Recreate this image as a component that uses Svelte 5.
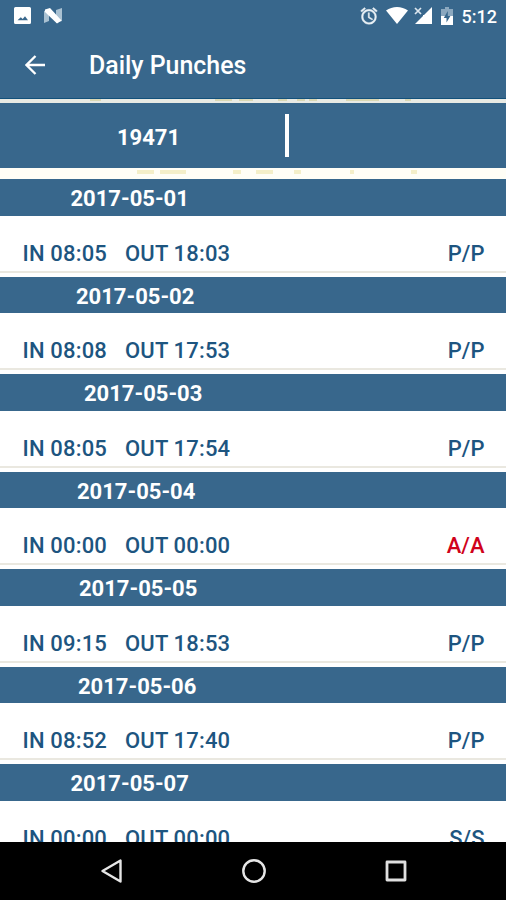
<script>
  const employee = '19471';

  // indent: where each date label starts in its bar
  const punches = [
    { date: '2017-05-01', indent: 70.5, in: '08:05', out: '18:03', status: 'P/P' },
    { date: '2017-05-02', indent: 76, in: '08:08', out: '17:53', status: 'P/P' },
    { date: '2017-05-03', indent: 84, in: '08:05', out: '17:54', status: 'P/P' },
    { date: '2017-05-04', indent: 77, in: '00:00', out: '00:00', status: 'A/A' },
    { date: '2017-05-05', indent: 79, in: '09:15', out: '18:53', status: 'P/P' },
    { date: '2017-05-06', indent: 78, in: '08:52', out: '17:40', status: 'P/P' },
    { date: '2017-05-07', indent: 70.5, in: '00:00', out: '00:00', status: 'S/S' },
  ];
</script>

<div class="screen">
  <header>
    <div class="statusbar">
      <svg class="photo" width="17" height="17" viewBox="0 0 17 17">
        <path fill="#fff" fill-rule="evenodd" d="M1.500 0h14A1.500 1.500 0 0 1 17 1.500v14a1.500 1.500 0 0 1-1.500 1.500h-14A1.500 1.500 0 0 1 0 15.500v-14A1.500 1.500 0 0 1 1.500 0zM3.500 13.300h10.500l-3-4-2.300 2.700-1.900-1.800z" />
      </svg>
      <svg class="nougat" width="20" height="16" viewBox="0 0 20 16">
        <path fill="#a9c1d2" d="M1 3l5-2v12l-5 2zM13 2l6-2v13l-6 2z" />
        <path fill="#fff" d="M2 1.500L7 0l11.500 12.500L14 15.500 2 4z" />
      </svg>
      <span class="gap"></span>
      <svg class="alarm" width="20" height="20" viewBox="0 0 24 24">
        <path fill="#e9f0f5" stroke="#e9f0f5" stroke-width=".5" d="M22 5.720l-4.600-3.860-1.290 1.530 4.600 3.860L22 5.720zM7.880 3.390L6.600 1.860 2 5.710l1.290 1.530 4.590-3.850zM12.500 8H11v6l4.750 2.850.75-1.230-4-2.370V8zM12 4c-4.970 0-9 4.030-9 9s4.020 9 9 9a9 9 0 0 0 0-18zm0 16c-3.870 0-7-3.130-7-7s3.130-7 7-7 7 3.130 7 7-3.130 7-7 7z" />
      </svg>
      <svg class="wifi" width="22" height="17" viewBox="0 0 22 17">
        <path fill="#fff" d="M11 17L0 3.500Q5 0 11 0t11 3.500z" />
      </svg>
      <svg class="signal" width="18" height="17" viewBox="0 0 18 17">
        <path fill="#fff" d="M18 0v17H1l8-8V8h1z" />
        <path stroke="#dce7ef" stroke-width="1.700" d="M1 1l6 6M7 1L1 7" />
      </svg>
      <svg class="battery" width="12" height="18" viewBox="0 0 12 18">
        <path fill="#8ba8bf" d="M4 0h4v2h4v7H0V2h4z" />
        <path fill="#fff" d="M0 9h12v9H0z" />
        <path fill="#38678c" d="M6.800 4L2.800 11h2.700v4.500L9.400 9H6.800z" />
      </svg>
      <span class="clock">5:12</span>
    </div>
    <div class="toolbar">
      <svg class="back" width="20" height="20" viewBox="0 0 20 20" fill="none" stroke="#fff" stroke-width="2.300">
        <path d="M20 10H2M10.500 1L1.500 10l9 9" />
      </svg>
      <h1>Daily Punches</h1>
    </div>
  </header>

  <svg class="strip" width="506" height="4" viewBox="0 0 506 4">
    <path stroke="#d9d7b4" stroke-width="2" d="M90 1h11M215 1h17M239 1h14M278 1h9M297 1h8M309 1h8M346 1h33M405 1h6" />
  </svg>

  <div class="employee">
    <span>{employee}</span>
    <i class="cursor"></i>
  </div>

  <svg class="strip light" width="506" height="11" viewBox="0 0 506 11">
    <path stroke="#f4efc9" stroke-width="4" d="M137 4h17M160 4h26M233 4h8M256 4h17M294 4h7M350 4h4M411 4h6" />
  </svg>

  <main>
    {#each punches as punch}
      <section>
        <h2 style="padding-left: {punch.indent}px">{punch.date}</h2>
        <div class="row">
          <span class="in">IN {punch.in}</span>
          <span class="out">OUT {punch.out}</span>
          <span class="status" class:absent={punch.status === 'A/A'}>{punch.status}</span>
        </div>
      </section>
    {/each}
  </main>

  <nav>
    <svg width="22" height="24" viewBox="0 0 22 24" fill="none" stroke="#e6e6e6" stroke-width="2.400" stroke-linejoin="round">
      <path d="M19.500 1.500v21L1.500 12z" />
    </svg>
    <svg width="24" height="24" viewBox="0 0 24 24" fill="none" stroke="#e6e6e6" stroke-width="2.400">
      <circle cx="12" cy="12" r="10.700" />
    </svg>
    <svg width="22" height="22" viewBox="0 0 22 22" fill="none" stroke="#e0e0e0" stroke-width="2.800" stroke-linejoin="round">
      <path d="M2 2h18v18H2z" />
    </svg>
  </nav>
</div>

<style>
  :global(body) {
    margin: 0;
    background: #fff;
  }
  .screen {
    display: flex;
    flex-direction: column;
    width: 506px;
    height: 900px;
    overflow: hidden;
    font-family: Roboto, sans-serif;
    color: #fff;
  }
  svg {
    display: block;
    flex: none;
  }
  header {
    flex: none;
    height: 99px;
    background: #38678c;
    border-bottom: 1px solid #13517b;
    box-sizing: border-box;
  }
  .statusbar {
    display: flex;
    align-items: center;
    height: 32px;
    padding: 0 9px 0 14px;
  }
  .photo {
    margin: -1px 12px 0 0;
  }
  .gap {
    flex: 1;
  }
  .alarm {
    margin: -1px 7px 0 0;
  }
  .wifi {
    margin: -2px 6px 0 0;
  }
  .signal {
    margin: -1px 9px 0 0;
  }
  .battery {
    margin: -1px 9px 0 0;
  }
  .clock {
    font-size: 18px;
    font-weight: 500;
  }
  .toolbar {
    display: flex;
    align-items: center;
    height: 65px;
    padding-left: 25px;
  }
  h1 {
    margin: 2px 0 0 44px;
    font-size: 24.9px;
    font-weight: 500;
  }
  .strip {
    background: #e8eae4;
  }
  .strip.light {
    background: #fffef6;
  }
  .employee {
    flex: none;
    display: flex;
    align-items: center;
    height: 65px;
    padding-left: 117px;
    background: #38678c;
    font-size: 22px;
    font-weight: 700;
  }
  .employee span {
    width: 168px;
    padding-top: 3px;
  }
  .cursor {
    width: 4px;
    height: 43px;
    background: #fff;
  }
  main {
    flex: 1;
    min-height: 0;
    overflow: hidden;
  }
  section {
    height: 97.5px;
    background: #fff;
  }
  h2 {
    height: 36.5px;
    margin: 0;
    background: #38678c;
    font-size: 22px;
    font-weight: 700;
    line-height: 39px;
  }
  .row {
    display: flex;
    height: 57px;
    padding: 0 21.5px 0 22.5px;
    border-bottom: 2px solid #eae8e0;
    box-sizing: border-box;
    font-size: 22px;
    font-weight: 500;
    line-height: 76px;
    color: #1d5580;
  }
  .in {
    width: 102.5px;
  }
  .in,
  .out {
    letter-spacing: 0.17px;
  }
  .status {
    margin-left: auto;
  }
  .absent {
    color: #d0021b;
  }
  nav {
    flex: none;
    display: flex;
    align-items: center;
    justify-content: space-between;
    height: 58px;
    padding: 0 99px 0 101px;
    background: #000;
    position: relative;
  }
</style>
